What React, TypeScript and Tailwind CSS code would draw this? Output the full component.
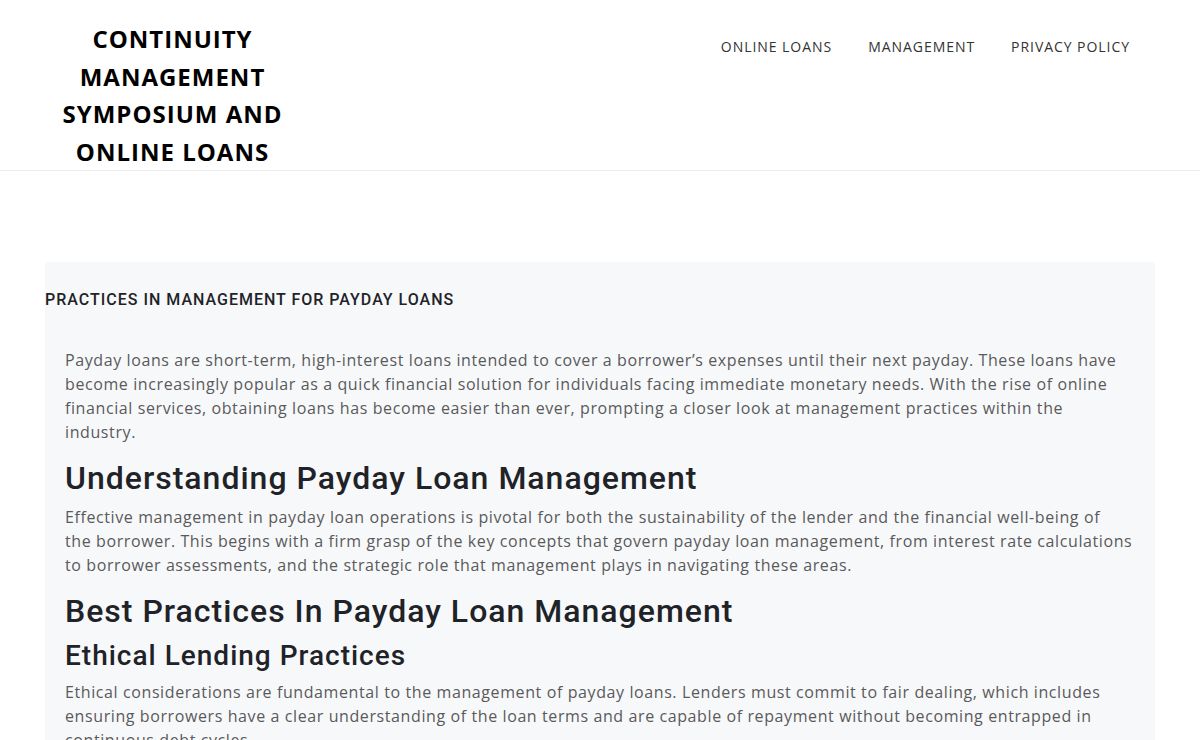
import React from 'react'

const navItems = ['Online Loans', 'Management', 'Privacy Policy']

function Header() {
  return (
    <header className="border-b border-[#ececec] h-[171px]">
      <div className="flex justify-between pl-[45px] pr-[70px]">
        <div className="w-[255px] pt-[20px] text-center">
          <a
            href="#"
            className="block text-[24px] leading-[37.7px] font-bold uppercase tracking-[1px] text-black"
            style={{ fontFamily: '"Open Sans", sans-serif' }}
          >
            Continuity Management Symposium and Online Loans
          </a>
        </div>
        <nav className="pt-[36px]">
          <ul
            className="flex gap-[36px] text-[14px] leading-[22px] uppercase tracking-[0.95px] text-[#333]"
            style={{ fontFamily: '"Open Sans", sans-serif' }}
          >
            {navItems.map((n) => (
              <li key={n}>
                <a href="#">{n}</a>
              </li>
            ))}
          </ul>
        </nav>
      </div>
    </header>
  )
}

export default function App() {
  const body = 'text-[16px] leading-[24px] tracking-[0.6px] text-[#5a5a5a]'
  const heading = 'text-[#1f2328] font-medium'
  return (
    <div className="min-h-screen bg-white">
      <Header />
      <main className="px-[45px] pt-[91px]">
        <article className="bg-[#f7f8fa] rounded-[3px] pt-[28px] pb-10">
          <h1
            className="text-[#1f2328] font-medium text-[16px] leading-[20px] uppercase tracking-[1px]"
            style={{ fontFamily: 'Roboto, sans-serif' }}
          >
            Practices in Management for Payday Loans
          </h1>
          <div className="pl-[20px] pr-[20px] pt-[38px]" style={{ fontFamily: '"Open Sans", sans-serif' }}>
            <p className={body}>
              Payday loans are short-term, high-interest loans intended to cover a borrower’s expenses until their next payday. These loans have become increasingly popular as a quick financial solution for individuals facing immediate monetary needs. With the rise of online financial services, obtaining loans has become easier than ever, prompting a closer look at management practices within the industry.
            </p>
            <h2
              className={`${heading} text-[32px] leading-[40px] tracking-[1px] mt-[14px] mb-[7px]`}
              style={{ fontFamily: 'Roboto, sans-serif' }}
            >
              Understanding Payday Loan Management
            </h2>
            <p className={body}>
              Effective management in payday loan operations is pivotal for both the sustainability of the lender and the financial well-being of
              <br />
              the borrower. This begins with a firm grasp of the key concepts that govern payday loan management, from interest rate calculations to borrower assessments, and the strategic role that management plays in navigating these areas.
            </p>
            <h2
              className={`${heading} text-[32px] leading-[40px] tracking-[1px] mt-[14px]`}
              style={{ fontFamily: 'Roboto, sans-serif' }}
            >
              Best Practices In Payday Loan Management
            </h2>
            <h3
              className={`${heading} text-[28px] leading-[34px] tracking-[1px] mt-[8px] mb-[7px]`}
              style={{ fontFamily: 'Roboto, sans-serif' }}
            >
              Ethical Lending Practices
            </h3>
            <p className={body}>
              Ethical considerations are fundamental to the management of payday loans. Lenders must commit to fair dealing, which includes ensuring borrowers have a clear understanding of the loan terms and are capable of repayment without becoming entrapped in continuous debt cycles.
            </p>
          </div>
        </article>
      </main>
    </div>
  )
}
